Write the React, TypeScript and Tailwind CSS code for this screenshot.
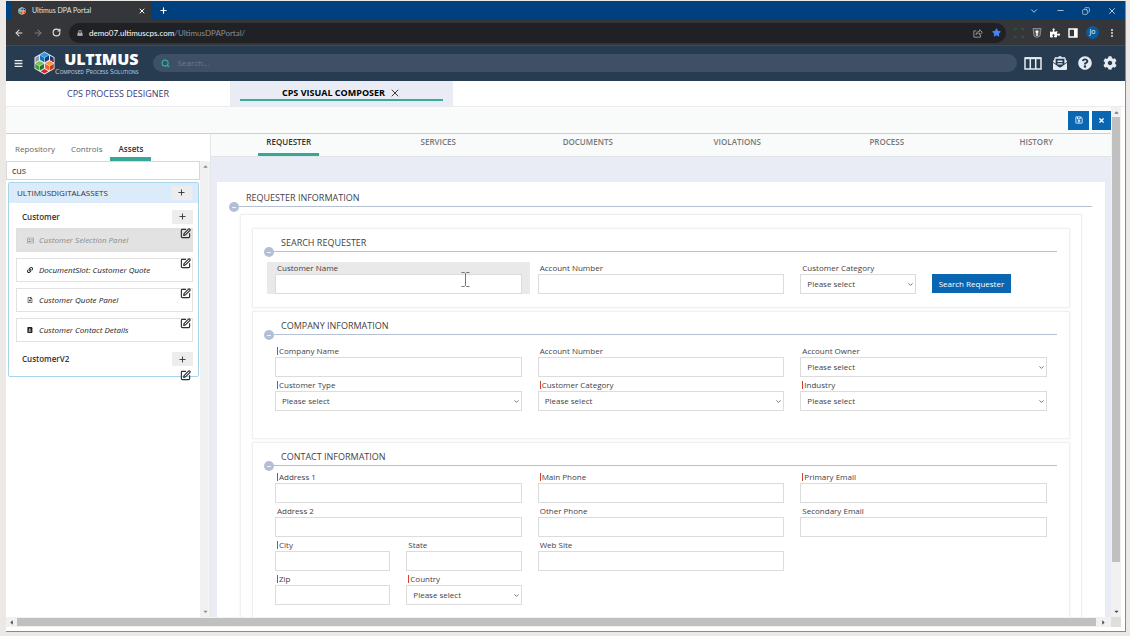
import { useId, type ReactNode } from "react";
import {
  FaBars,
  FaCaretDown,
  FaCaretLeft,
  FaCaretRight,
  FaCaretUp,
  FaCog,
  FaEnvelopeOpenText,
  FaLock,
  FaPuzzlePiece,
  FaQuestionCircle,
  FaRegAddressCard,
  FaRegFileAlt,
  FaRegSave,
  FaStar,
  FaAddressBook,
  FaLink,
  FaTimes,
} from "react-icons/fa";
import { ArrowLeft, ArrowRight, ChevronDown, Copy, EllipsisVertical, Minus, Plus, RotateCw, Search, SquarePen, X } from "lucide-react";

function Hexagon({ className }: { className: string }) {
  return (
    <svg viewBox="0 0 22 24" className={className} aria-hidden="true">
      <path d="M11 0 21.5 6v12L11 24 .5 18V6Z" fill="#e9edf2" />
      <path d="m11 .8 4.800 2.700L11 6.200 6.200 3.500Z" fill="#2f9be0" />
      <path d="m6.200 4 4.500 2.600v4.600L6.200 8.600Z" fill="#1273c4" />
      <path d="m15.800 4-4.500 2.600v4.600l4.500-2.600Z" fill="#0d3f86" />
      <path d="m16.800 4.500 3.700 2v4.700l-3.700-2.200Z" fill="#17365f" />
      <path d="m5.200 4.500-3.700 2v4.700L5.200 9Z" fill="#8a98a8" />
      <path d="m5.800 9.800 4.500 2.500-4.500 2.500-4.500-2.500Z" fill="#7cc04b" />
      <path d="m1.300 12.800 4.200 2.500v4.500l-4.200-2.400Z" fill="#3f9a3c" />
      <path d="m10.400 12.800-4.300 2.500v4.500l4.300-2.400Z" fill="#23702c" />
      <path d="m16.200 9.800 4.500 2.500-4.500 2.500-4.500-2.500Z" fill="#f79a3c" />
      <path d="m11.600 12.800 4.300 2.500v4.500l-4.300-2.400Z" fill="#f0641e" />
      <path d="m20.700 12.800-4.200 2.500v4.500l4.200-2.400Z" fill="#c8391a" />
      <path d="m11 18.300 4 2.400L11 23l-4-2.300Z" fill="#d8232f" />
      <path d="m17 9 3.600 2.100V9.500L17.500 7.700Z" fill="#b8155c" />
    </svg>
  );
}

function BrowserChrome() {
  return (
    <>
      <div className="flex h-[19px] shrink-0 items-stretch bg-[#00407f] pl-[5px] text-[#dbe6f0]">
        <div className="flex w-[140px] items-center rounded-t bg-[#35363a] pr-[5px] pl-[7px]">
          <Hexagon className="h-2 w-2" />
          <span className="ml-[6px] flex-1 font-['Lato',sans-serif] text-[7px]">Ultimus DPA Portal</span>
          <button aria-label="Close tab" className="text-white"><X size={8} strokeWidth={3} /></button>
        </div>
        <button aria-label="New tab" className="ml-2 text-white"><Plus size={9} strokeWidth={3} /></button>
        <div className="ml-auto flex items-center gap-[17px] pr-2">
          <button aria-label="Tab search"><ChevronDown size={10} /></button>
          <button aria-label="Minimize"><Minus size={9} /></button>
          <button aria-label="Restore"><Copy size={8} className="-scale-x-100" /></button>
          <button aria-label="Close window"><X size={10} /></button>
        </div>
      </div>
      <div className="flex h-[25px] shrink-0 items-center bg-[#35363a] pr-2 pl-2 text-[#e2e3e5]">
        <button aria-label="Back"><ArrowLeft size={10} strokeWidth={2.500} /></button>
        <button aria-label="Forward" className="ml-[9px] text-[#7c7d80]"><ArrowRight size={10} strokeWidth={2.500} /></button>
        <button aria-label="Reload" className="ml-[9px]"><RotateCw size={9} strokeWidth={3} /></button>
        <div className="ml-2 flex h-5 flex-1 items-center rounded-full bg-[#202124] pr-[5px] pl-2">
          <FaLock size={6} className="text-[#a5a6a8]" />
          <p className="ml-[6px] flex-1 font-['Lato',sans-serif] text-[8px] text-white">
            demo07.ultimuscps.com<span className="text-[#8d8e90]">/UltimusDPAPortal/</span>
          </p>
          <button aria-label="Share" className="text-[#a5a6a8]">
            <svg viewBox="0 0 12 12" className="h-[10px] w-[10px]" fill="none" stroke="currentColor" aria-hidden="true">
              <path d="M4 3.500H1v7.500h8V8.500M3.500 8c.4-2.800 2-3.800 4.500-3.900V2l3.300 3.200L8 8.300V6.200C6 6.200 4.700 6.700 3.500 8Z" />
            </svg>
          </button>
          <button aria-label="Bookmark" className="ml-[9px] text-[#4285f4]"><FaStar size={9} /></button>
        </div>
        <div className="ml-2 flex items-center gap-2">
          <svg viewBox="0 0 10 10" className="h-[10px] w-[10px]" fill="none" stroke="#2f5a36" aria-hidden="true">
            <path d="M.5 3V.5H3M7 .5h2.500V3M9.500 7v2.500H7M3 9.500H.5V7" />
          </svg>
          <svg viewBox="0 0 10 10" className="h-[10px] w-[10px]" aria-hidden="true">
            <path d="M1 .5h8L8 8 5 9.500 2 8Z" fill="#55575a" stroke="#a7a8aa" strokeWidth=".7" />
            <path d="M5 2 3.200 3.800 4.300 5v3h1.400V5l1.100-1.200Z" fill="#fff" />
          </svg>
          <FaPuzzlePiece size={10} className="text-white" />
          <svg viewBox="0 0 10 10" className="h-[10px] w-[10px]" aria-hidden="true">
            <path d="M1 1h8v8H1Z" fill="none" stroke="#fff" strokeWidth="1.400" />
            <path d="M6 1h3v8H6Z" fill="#fff" />
          </svg>
          <span className="flex h-[13px] w-[13px] items-center justify-center rounded-full bg-[#0a5aa0] text-[7px] text-white">Jo</span>
          <button aria-label="Browser menu"><EllipsisVertical size={10} strokeWidth={3} /></button>
        </div>
      </div>
    </>
  );
}

function PortalHeader() {
  return (
    <header className="flex h-9 shrink-0 items-center border-t border-[#45494f] bg-[#273c50] px-2 pb-px text-[#e6ecf4]">
      <button aria-label="Main menu"><FaBars size={9} /></button>
      <div className="ml-[11px] flex items-center">
        <Hexagon className="h-6 w-[21px]" />
        <div className="flex flex-col items-end">
          <span className="font-['Noto_Sans',sans-serif] text-[16px] leading-4 font-black text-white">ULTIMUS</span>
          <span className="text-[7px] leading-[9px] text-[#c9d3de] [font-variant:small-caps]">Composed Process Solutions</span>
        </div>
      </div>
      <label className="ml-[14px] flex h-[18px] flex-1 items-center gap-2 rounded-full bg-[#3e4f66] px-2">
        <Search size={9} strokeWidth={3} className="text-[#35b0a0]" />
        <input aria-label="Search" placeholder="Search..." className="min-w-0 flex-1 bg-transparent text-[8px] outline-none placeholder:text-[#6b7b91]" />
      </label>
      <div className="ml-[7px] flex items-center gap-[11px]">
        <button aria-label="Columns">
          <svg viewBox="0 0 18 13" className="h-[13px] w-[18px]" fill="none" stroke="currentColor" strokeWidth="1.500" aria-hidden="true">
            <path d="M1 1h16v11H1ZM6.300 1v11M11.700 1v11" />
            <path d="M1 1.200h16" strokeWidth="2" />
          </svg>
        </button>
        <button aria-label="Messages"><FaEnvelopeOpenText size={14} /></button>
        <button aria-label="Help"><FaQuestionCircle size={14} /></button>
        <button aria-label="Settings"><FaCog size={14} /></button>
      </div>
    </header>
  );
}

function PortalTabs() {
  return (
    <nav className="flex h-[26px] shrink-0 border-b border-[#ececee] bg-white text-[9px]">
      <a href="#designer" className="flex w-[224px] items-center justify-center text-[#3c3a78]">CPS PROCESS DESIGNER</a>
      <div className="flex w-[223px] bg-[#e9ecf4] px-[10px] pb-[5px]">
        <div className="flex flex-1 items-center justify-center gap-1 border-b-2 border-[#37ab9c] pt-[5px] font-bold text-black">
          <a href="#composer">CPS VISUAL COMPOSER</a>
          <button aria-label="Close CPS Visual Composer"><X size={12} strokeWidth={1.500} /></button>
        </div>
      </div>
    </nav>
  );
}

function AddButton({ name }: { name: string }) {
  return (
    <button aria-label={`Add to ${name}`} className="flex h-[14px] w-[21px] items-center justify-center bg-[#ededed] text-[#3a3a3a]">
      <Plus size={9} strokeWidth={2.500} />
    </button>
  );
}

const assets = [
  { name: "Customer Selection Panel", icon: <FaRegAddressCard size={7} />, active: true },
  { name: "DocumentSlot: Customer Quote", icon: <FaLink size={6} />, active: false },
  { name: "Customer Quote Panel", icon: <FaRegFileAlt size={6} />, active: false },
  { name: "Customer Contact Details", icon: <FaAddressBook size={6} />, active: false },
];

function AssetSidebar() {
  return (
    <aside className="flex w-[204px] shrink-0 flex-col bg-white">
      <nav className="flex h-[27px] shrink-0 items-stretch gap-4 pl-[9px] text-[8px] font-medium text-[#666]">
        <a href="#repository" className="flex items-center pt-[3px]">Repository</a>
        <a href="#controls" className="flex items-center pt-[3px]">Controls</a>
        <a href="#assets" className="-ml-2 flex w-[41px] items-center justify-center border-b-4 border-[#37a898] pt-[7px] font-semibold text-[#333]">Assets</a>
      </nav>
      <div className="flex min-h-0 flex-1">
        <div className="flex-1">
          <input aria-label="Filter assets" defaultValue="cus" className="block h-[19px] w-full border border-[#d8d8d8] px-[5px] text-[9px] text-[#333] outline-none" />
          <section className="mr-px ml-[2px] mt-[2px] rounded-[2px] border border-[#a9d3e8] pb-[10px] text-[8px] font-medium text-[#303236]">
            <div className="flex h-5 items-center justify-between bg-[#dcebfa] pr-[6px] pb-px pl-2">
              <h2>ULTIMUSDIGITALASSETS</h2>
              <AddButton name="Ultimus digital assets" />
            </div>
            <div className="flex h-[25px] items-center justify-between pt-[2px] pr-[5px] pl-[13px] font-semibold">
              <h3>Customer</h3>
              <AddButton name="Customer" />
            </div>
            <ul className="flex flex-col gap-[6px] pr-[5px] pl-[7px]">
              {assets.map((a) => (
                <li
                  key={a.name}
                  className={`relative flex h-6 items-center border pl-[10px] text-[8px] font-normal italic ${
                    a.active ? "border-[#e0e0e0] bg-[#e2e2e2] text-[#8b8b8b]" : "border-[#e2e2e2] bg-white text-[#222]"
                  }`}
                >
                  <span className="w-3">{a.icon}</span>
                  {a.name}
                  <button aria-label={`Edit ${a.name}`} className="absolute -top-px right-px text-[#2d2f31]">
                    <SquarePen size={11} strokeWidth={2.500} />
                  </button>
                </li>
              ))}
            </ul>
            <div className="relative mt-[10px] flex h-[14px] items-center justify-between pr-[5px] pl-[13px] font-semibold">
              <h3>CustomerV2</h3>
              <AddButton name="CustomerV2" />
              <button aria-label="Edit CustomerV2" className="absolute top-[18px] right-[7px] text-[#2d2f31]">
                <SquarePen size={11} strokeWidth={2.500} />
              </button>
            </div>
          </section>
        </div>
        <div className="flex w-[10px] flex-col items-center justify-between bg-[#f1f1f1] py-[2px] text-[#8a8a8a]">
          <FaCaretUp size={7} />
          <FaCaretDown size={7} />
        </div>
      </div>
    </aside>
  );
}

function SectionTitle({ children }: { children: ReactNode }) {
  return (
    <div className="relative border-b border-[#b6c0d0]">
      <h2 className="pl-3 text-[9px] leading-[17px] text-[#3f4246]">{children}</h2>
      <button aria-label="Collapse section" className="absolute -bottom-[6px] -left-[5px] flex h-[10px] w-[10px] items-center justify-center rounded-full bg-[#b3bfd6]">
        <span className="h-px w-1 bg-[#edf1f8]" />
      </button>
    </div>
  );
}

type FieldProps = { label: string; required?: boolean; select?: boolean; half?: boolean; active?: boolean };

function Field({ label, required, select, half, active }: FieldProps) {
  const id = useId();
  return (
    <div className={`relative px-2 ${half ? "col-span-1" : "col-span-2"} ${active ? "bg-[#e9e9e9]" : ""}`}>
      <label htmlFor={id} className="flex h-3 items-center pl-[2px] text-[8px] text-[#3f4246]">
        {required && <span className="mr-px h-2 border-l border-[#d0402f]" />}
        {label}
      </label>
      {select ? (
        <div className="relative">
          <select id={id} className="block h-5 w-full appearance-none border border-[#dcdcdc] bg-white px-[6px] text-[8px] text-[#3f4246] outline-none">
            <option>Please select</option>
          </select>
          <ChevronDown size={7} strokeWidth={2.500} className="pointer-events-none absolute top-[7px] right-[2px] text-[#444]" />
        </div>
      ) : (
        <input id={id} className="block h-5 w-full border border-[#dcdcdc] bg-white px-[6px] text-[8px] outline-none" />
      )}
      {active && (
        <svg viewBox="0 0 9 15" className="absolute top-[10px] right-[60px] h-[15px] w-[9px]" fill="none" stroke="#777" aria-hidden="true">
          <path d="M.5.500h3l1 1 1-1h3M4.500 1.500v12M.5 14.500h3l1-1 1 1h3" />
        </svg>
      )}
    </div>
  );
}

function Panel({ title, children, className }: { title: string; children: ReactNode; className: string }) {
  return (
    <section className={`border border-[#f0f0f1] px-[14px] pt-[5px] shadow-[0_0_2px_#f0f0f2] ${className}`}>
      <div className="-mr-[2px] pl-[2px]"><SectionTitle>{title}</SectionTitle></div>
      {children}
    </section>
  );
}

const requesterTabs = ["REQUESTER", "SERVICES", "DOCUMENTS", "VIOLATIONS", "PROCESS", "HISTORY"];

function RequesterForm() {
  return (
    <main className="flex min-w-0 flex-1 flex-col border-l border-[#e4e6ea] bg-[#e9ecf4]">
      <nav className="grid h-[23px] shrink-0 grid-cols-6 border-b border-[#e0e6e8] bg-[#f9fbfb] pl-[3px] text-[8px] font-semibold text-[#777]">
        {requesterTabs.map((t, i) => (
          <a key={t} href={`#${t.toLowerCase()}`} className="flex justify-center">
            <span className={i === 0 ? "border-b-[3px] border-[#37a898] px-2 pt-[2px] text-[#333]" : "pt-[2px]"}>{t}</span>
          </a>
        ))}
      </nav>
      <div className="min-h-0 flex-1 overflow-hidden px-[6px] pt-[25px]">
        <form className="min-h-full bg-white px-[23px] pt-[7px]" onSubmit={(e) => e.preventDefault()}>
          <div className="-mr-[10px] -ml-[6px]"><SectionTitle>REQUESTER INFORMATION</SectionTitle></div>
          <div className="mt-[7px] flex flex-col gap-[3px] border border-[#f0f0f1] px-[11px] pt-[13px] shadow-[0_0_2px_#f0f0f2]">
            <Panel title="SEARCH REQUESTER" className="h-20">
              <div className="mt-[10px] grid grid-cols-6">
                <Field label="Customer Name" active />
                <Field label="Account Number" />
                <Field label="Customer Category" select half />
                <div className="flex items-end px-2 pb-px">
                  <button className="h-[19px] bg-[#0b66b2] px-[7px] text-[8px] whitespace-nowrap text-white">Search Requester</button>
                </div>
              </div>
            </Panel>
            <Panel title="COMPANY INFORMATION" className="h-32">
              <div className="mt-[10px] grid grid-cols-6 gap-y-[2px]">
                <Field label="Company Name" required />
                <Field label="Account Number" />
                <Field label="Account Owner" select />
                <Field label="Customer Type" required select />
                <Field label="Customer Category" required select />
                <Field label="Industry" required select />
              </div>
            </Panel>
            <Panel title="CONTACT INFORMATION" className="min-h-[220px]">
              <div className="mt-[5px] grid grid-cols-6 gap-y-[2px]">
                <Field label="Address 1" required />
                <Field label="Main Phone" required />
                <Field label="Primary Email" required />
                <Field label="Address 2" />
                <Field label="Other Phone" />
                <Field label="Secondary Email" />
                <Field label="City" required half />
                <Field label="State" half />
                <Field label="Web Site" />
                <div className="col-span-2" />
                <Field label="Zip" required half />
                <Field label="Country" required select half />
              </div>
            </Panel>
          </div>
        </form>
      </div>
    </main>
  );
}

export default function App() {
  return (
    <div className="h-screen bg-[#ebe8e6] pt-px pr-1 pb-1 pl-[6px] font-['Open_Sans','Noto_Sans',sans-serif] text-[8px]">
      <div className="flex h-full flex-col border-r border-b border-[#8a8a8c] bg-white">
        <BrowserChrome />
        <PortalHeader />
        <PortalTabs />
        <div className="flex min-h-0 flex-1 pr-1">
          <div className="flex min-w-0 flex-1 flex-col">
            <div className="flex h-[27px] shrink-0 items-center justify-end gap-[3px] border-b border-[#cfcfcf] bg-[#f9fafa]">
              <button aria-label="Save" className="flex h-[19px] w-[21px] items-center justify-center bg-[#0b66b2] text-white"><FaRegSave size={8} /></button>
              <button aria-label="Close" className="flex h-[19px] w-[19px] items-center justify-center bg-[#0b66b2] text-white"><FaTimes size={7} /></button>
            </div>
            <div className="flex min-h-0 flex-1">
              <AssetSidebar />
              <RequesterForm />
            </div>
          </div>
          <div className="flex w-[10px] flex-col items-center bg-[#f1f1f1] py-[2px] text-[#777]">
            <FaCaretUp size={7} className="shrink-0" />
            <div className="mt-px h-[88%] w-2 bg-[#c0c0c0]" />
            <FaCaretDown size={7} className="mt-auto shrink-0 text-[#444]" />
          </div>
        </div>
        <div className="mr-1 mb-1 flex h-[10px] shrink-0 items-center bg-[#f1f1f1] text-[#555]">
          <FaCaretLeft size={7} className="mx-[2px]" />
          <div className="h-2 flex-1 bg-[#c0c0c0]" />
          <FaCaretRight size={7} className="mx-1" />
          <div className="h-full w-[10px] bg-[#dedede]" />
        </div>
      </div>
    </div>
  );
}
